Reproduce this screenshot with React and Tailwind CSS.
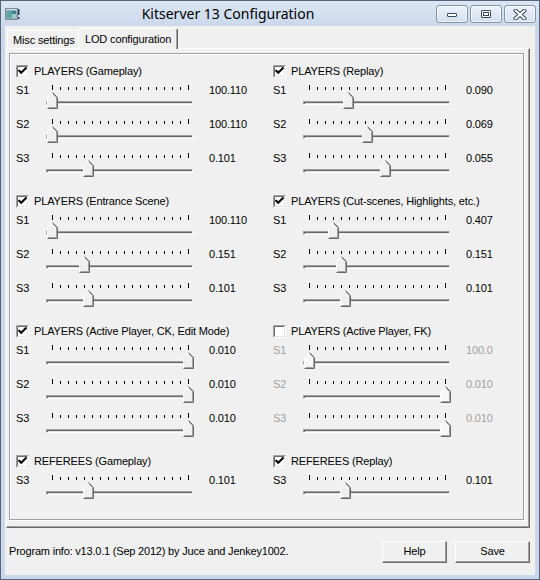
import React from "react";

const groups = [
  [
    { title: "PLAYERS (Gameplay)", checked: true, rows: [["S1", 36, "100.110"], ["S2", 36, "100.110"], ["S3", 72, "0.101"]] },
    { title: "PLAYERS (Replay)", checked: true, rows: [["S1", 75, "0.090"], ["S2", 94, "0.069"], ["S3", 112, "0.055"]] },
  ],
  [
    { title: "PLAYERS (Entrance Scene)", checked: true, rows: [["S1", 36, "100.110"], ["S2", 68, "0.151"], ["S3", 72, "0.101"]] },
    { title: "PLAYERS (Cut-scenes, Highlights, etc.)", checked: true, rows: [["S1", 60, "0.407"], ["S2", 68, "0.151"], ["S3", 72, "0.101"]] },
  ],
  [
    { title: "PLAYERS (Active Player, CK, Edit Mode)", checked: true, rows: [["S1", 172, "0.010"], ["S2", 172, "0.010"], ["S3", 172, "0.010"]] },
    { title: "PLAYERS (Active Player, FK)", checked: false, disabled: true, rows: [["S1", 36, "100.0"], ["S2", 172, "0.010"], ["S3", 172, "0.010"]] },
  ],
  [
    { title: "REFEREES (Gameplay)", checked: true, rows: [["S3", 72, "0.101"]] },
    { title: "REFEREES (Replay)", checked: true, rows: [["S3", 72, "0.101"]] },
  ],
];

function Ticks() {
  const t = [];
  for (let i = 0; i < 18; i++) {
    const long = i === 0 || i === 17;
    t.push(<rect key={i} x={6 + 8 * i} y={long ? 1 : 3} width="1" height={long ? 5 : 3} fill="#000" />);
  }
  return (
    <svg width="147" height="6" className="block">
      {t}
    </svg>
  );
}

function Thumb({ apex, disabled, id }) {
  const left = apex - 30 - 5;
  return (
    <svg className="absolute top-[2px]" style={{ left }} width="11" height="17" viewBox="0 0 11 17">
      <defs>
        <pattern id={id} width="2" height="2" patternUnits="userSpaceOnUse">
          <rect width="2" height="2" fill="#f0f0f0" />
          <rect width="1" height="1" fill="#fff" />
          <rect x="1" y="1" width="1" height="1" fill="#fff" />
        </pattern>
      </defs>
      <path d="M0.5 16.5V5.5L5.5 0.5L10.5 5.5V16.5Z" fill={disabled ? `url(#${id})` : "#f0f0f0"} />
      <path d="M0.5 16V5.5L5.5 0.5" stroke="#fff" fill="none" />
      <path d="M5.5 0.5L10.5 5.5V16.5H0.5" stroke="#696969" fill="none" />
      <path d="M5.8 1.8L9.5 5.5V15.5H1.5" stroke="#a0a0a0" fill="none" />
    </svg>
  );
}

function Slider({ apex, disabled, id }) {
  return (
    <div className="w-[147px] pt-[4px] flex flex-col">
      <Ticks />
      <div className="relative h-[24px]">
        <div className="mt-[11px] h-[4px] w-[147px] border border-t-[#a0a0a0] border-l-[#a0a0a0] border-r-white border-b-white shadow-[inset_1px_1px_0_#696969,inset_-1px_-1px_0_#e3e3e3]" />
        <Thumb apex={apex} disabled={disabled} id={id} />
      </div>
    </div>
  );
}

function CheckBox({ checked }) {
  return (
    <svg width="13" height="13" viewBox="0 0 13 13" className="block">
      <rect x="0" y="0" width="13" height="13" fill="#fff" />
      <path d="M0.5 12.5V0.5H12.5" stroke="#a0a0a0" fill="none" />
      <path d="M1.5 11.5V1.5H11.5" stroke="#696969" fill="none" />
      <path d="M1.5 11.5H11.5V1.5" stroke="#e3e3e3" fill="none" />
      {checked && <path d="M3.2 5.8L5.2 7.8L9.8 3.2" stroke="#000" strokeWidth="2" fill="none" strokeLinecap="square" />}
    </svg>
  );
}

function Group({ g, gi, ci }) {
  const txt = g.disabled ? "text-[#a0a0a0]" : "text-black";
  return (
    <div className="flex flex-col">
      <div className="h-[18px] flex items-center gap-[5px]">
        <CheckBox checked={g.checked} />
        <span className="leading-[14px] text-black">{g.title}</span>
      </div>
      {g.rows.map((r, ri) => (
        <div key={ri} className="flex h-[34px]">
          <div className={`w-[30px] pt-[3px] leading-[15px] ${txt}`}>{r[0]}</div>
          <Slider apex={r[1]} disabled={g.disabled} id={`d${gi}${ci}${ri}`} />
          <div className={`pl-[16px] pt-[3px] leading-[15px] ${txt}`}>{r[2]}</div>
        </div>
      ))}
    </div>
  );
}

function CaptionButton({ children }) {
  return (
    <div className="w-[32px] h-[18px] rounded-[3px] border border-[#8293aa] bg-gradient-to-b from-[#eef3f9] to-[#d3dfed] flex items-center justify-center shadow-[inset_0_0_0_1px_rgba(255,255,255,0.6)]">
      {children}
    </div>
  );
}

export default function App() {
  return (
    <div className="w-[540px] h-[580px] border border-[#56657a] bg-[#c9d8ea] flex flex-col font-['Liberation_Sans',Arial,sans-serif] text-[11px] tracking-[-0.15px]">
      {/* Title bar */}
      <div className="h-[25px] flex items-start bg-gradient-to-b from-[#dbe6f2] to-[#cad9eb]">
        <div className="ml-[4px] mt-[7px] w-[15px] h-[13px]">
          <svg width="15" height="13" viewBox="0 0 15 13">
            <rect x="0.5" y="0.5" width="12" height="11" fill="#d6dde4" stroke="#7a8896" />
            <rect x="1.5" y="2.5" width="10" height="8" fill="#3d7f86" />
            <rect x="2" y="3" width="5" height="7" fill="#5aa6a0" />
            <rect x="7" y="6" width="4" height="4" fill="#9fcdc6" />
            <rect x="13" y="1" width="1.5" height="6" fill="#2a3f66" />
            <rect x="13" y="9" width="1.5" height="2" fill="#2a3f66" />
          </svg>
        </div>
        <div className="flex-1 text-center mt-[3px] font-['Noto_Sans',sans-serif] text-[14px] leading-[20px] tracking-normal text-black">
          Kitserver 13 Configuration
        </div>
        <div className="mt-[4px] mr-[3px] flex gap-[2px]">
          <CaptionButton>
            <svg width="12" height="8" viewBox="0 0 12 8">
              <rect x="1.5" y="3.5" width="9" height="3" rx="0.5" fill="#fff" stroke="#3b4a5e" />
            </svg>
          </CaptionButton>
          <CaptionButton>
            <svg width="12" height="10" viewBox="0 0 12 10">
              <rect x="1.5" y="1.5" width="9" height="7" rx="0.5" fill="#fff" stroke="#3b4a5e" />
              <rect x="3.5" y="3.5" width="5" height="3" fill="none" stroke="#3b4a5e" />
            </svg>
          </CaptionButton>
          <CaptionButton>
            <svg width="14" height="11" viewBox="0 0 14 11">
              <path d="M2.5 1.5L11.5 9.5M11.5 1.5L2.5 9.5" stroke="#3b4a5e" strokeWidth="4" strokeLinecap="round" />
              <path d="M2.5 1.5L11.5 9.5M11.5 1.5L2.5 9.5" stroke="#fff" strokeWidth="2" strokeLinecap="round" />
            </svg>
          </CaptionButton>
        </div>
      </div>

      {/* Client area */}
      <div className="mx-[4px] mb-[4px] flex-1 bg-[#f0f0f0] flex flex-col">
        {/* Tabs */}
        <div className="h-[22px] flex items-end pl-[2px] relative z-10">
          <div className="w-[73px] h-[18px] border-l border-t border-white border-r border-r-[#696969] rounded-t-[2px] shadow-[inset_-1px_0_0_#a0a0a0] flex items-center pl-[5px] leading-[14px]">
            Misc settings
          </div>
          <div className="-ml-[2px] w-[100px] h-[21px] -mb-[1px] bg-[#f0f0f0] border-l border-t border-white border-r border-r-[#696969] rounded-t-[2px] shadow-[inset_-1px_0_0_#a0a0a0] flex items-start pt-[3px] pl-[6px] leading-[14px]">
            LOD configuration
          </div>
        </div>
        {/* Panel */}
        <div className="ml-[1px] w-[524px] h-[480px] border border-l-white border-t-white border-r-[#696969] border-b-[#696969] shadow-[inset_-1px_-1px_0_#a0a0a0]">
          <div className="ml-[2px] mt-[4px] w-[515px] h-[467px] border border-[#a0a0a0] shadow-[inset_1px_1px_0_#fff,1px_1px_0_#fff] pl-[6px] pt-[8px] flex flex-col gap-[10px]">
            {groups.map((row, gi) => (
              <div key={gi} className="grid grid-cols-[257px_257px]">
                {row.map((g, ci) => (
                  <Group key={ci} g={g} gi={gi} ci={ci} />
                ))}
              </div>
            ))}
          </div>
        </div>
        {/* Bottom */}
        <div className="flex-1 flex items-center pl-[4px] pr-[5px]">
          <div className="flex-1 text-black tracking-[-0.2px]">Program info: v13.0.1 (Sep 2012) by Juce and Jenkey1002.</div>
          <div className="flex gap-[8px]">
            <div className="w-[65px] h-[22px] border border-l-white border-t-white border-r-[#696969] border-b-[#696969] shadow-[inset_-1px_-1px_0_#a0a0a0] flex items-center justify-center">Help</div>
            <div className="w-[75px] h-[22px] border border-l-white border-t-white border-r-[#696969] border-b-[#696969] shadow-[inset_-1px_-1px_0_#a0a0a0] flex items-center justify-center">Save</div>
          </div>
        </div>
      </div>
    </div>
  );
}
